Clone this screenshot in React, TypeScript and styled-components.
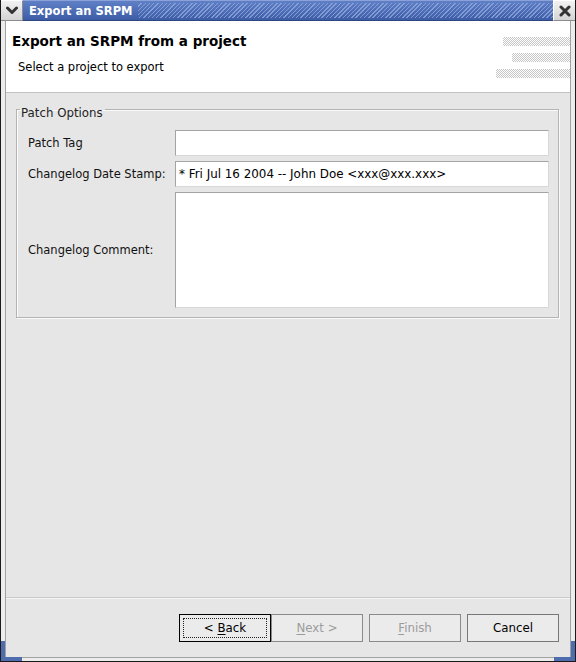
import * as React from "react";
import styled, { createGlobalStyle } from "styled-components";

const GlobalStyle = createGlobalStyle`
  html, body {
    margin: 0;
    padding: 0;
    background: #e6e6e6;
  }
  body {
    font-family: "DejaVu Sans", "Liberation Sans", sans-serif;
    font-size: 11.5px;
    color: #000;
  }
`;

const Frame = styled.div`
  position: relative;
  width: 576px;
  height: 662px;
  box-sizing: border-box;
  display: flex;
  flex-direction: column;
  background: #ececec;
  border-left: 1px solid #1a1a1a;
  border-right: 1px solid #1a1a1a;
  border-bottom: 1px solid #1a1a1a;
  overflow: hidden;
`;

const TitleBar = styled.div`
  display: flex;
  height: 21px;
  flex: none;
  margin-left: -1px;
  margin-right: -1px;
`;

const FrameButton = styled.div`
  width: 23px;
  display: flex;
  align-items: center;
  justify-content: center;
  background: linear-gradient(#f2f2f2, #d4d4d4);
  border: 1px solid #8c8c8c;
  border-top-color: #fff;
  border-left-color: #fff;
  box-sizing: border-box;
`;

const TitleArea = styled.div`
  flex: 1;
  display: flex;
  align-items: center;
  background: linear-gradient(#5f7fc6, #3c5ca6);
  border-top: 1px solid #8aa2d8;
  border-bottom: 1px solid #2e4680;
  box-sizing: border-box;
`;

const TitleText = styled.span`
  color: #fff;
  font-weight: bold;
  font-size: 11.5px;
  padding: 0 5px 0 6px;
  white-space: nowrap;
`;

const Hatch = styled.div`
  flex: 1;
  align-self: stretch;
  margin: 2px 0;
  background: repeating-linear-gradient(
    135deg,
    transparent 0 2px,
    rgba(150, 172, 224, 0.75) 2px 3px
  );
`;

const Client = styled.div`
  flex: 1;
  display: flex;
  flex-direction: column;
  margin: 0 4px 3px 4px;
  border: 1px solid #a2a2a2;
  border-top: none;
  background: #e6e6e6;
`;

const Header = styled.div`
  height: 71px;
  flex: none;
  display: flex;
  background: #fff;
  border-bottom: 1px solid #c4c4c4;
`;

const HeaderText = styled.div`
  flex: 1;
  padding: 12px 0 0 6px;
`;

const PageTitle = styled.div`
  font-weight: bold;
  font-size: 13.5px;
  line-height: 16px;
`;

const PageMessage = styled.div`
  font-size: 11.5px;
  line-height: 14px;
  margin: 11px 0 0 6px;
`;

const Decor = styled.div`
  width: 76px;
  display: flex;
  flex-direction: column;
  align-items: flex-end;
  gap: 7px;
  padding: 16px 0 0 0;
`;

const DecorBar = styled.div<{ $w: number }>`
  width: ${(p) => p.$w}px;
  height: 9px;
  background: repeating-conic-gradient(#c6c6c6 0 25%, #fff 0 50%) 0 0 / 2px 2px;
`;

const Body = styled.div`
  flex: 1;
  display: flex;
  flex-direction: column;
  padding: 5px 11px 0 10px;
`;

const Group = styled.fieldset`
  margin: 0;
  padding: 10px 9px 9px 11px;
  border: 1px solid #b4b4b4;
  box-shadow: inset 1px 1px 0 #fafafa, 1px 1px 0 #fafafa;
`;

const Legend = styled.legend`
  padding: 8px 2px 0 1px;
  margin-left: -8px;
  line-height: 14px;
  color: #222;
  font-size: 11.8px;
`;

const Form = styled.div`
  display: grid;
  grid-template-columns: 147px 1fr;
  grid-template-rows: 26px 26px 116px;
  row-gap: 5px;
`;

const Label = styled.label`
  display: flex;
  align-items: center;
  white-space: nowrap;
  color: #111;
`;

const Field = styled.div<{ $multi?: boolean }>`
  box-sizing: border-box;
  background: #fff;
  border: 1px solid #a4a4a4;
  border-right-color: #d8d8d8;
  border-bottom-color: #d8d8d8;
  padding: ${(p) => (p.$multi ? "3px 4px" : "0 3px")};
  display: flex;
  align-items: ${(p) => (p.$multi ? "flex-start" : "center")};
  font-size: 11.9px;
  white-space: nowrap;
`;

const Spacer = styled.div`
  flex: 1;
`;

const Separator = styled.div`
  height: 1px;
  background: #c8c8c8;
  border-bottom: 1px solid #f6f6f6;
  margin: 0 -11px 0 -10px;
`;

const ButtonRow = styled.div`
  display: flex;
  justify-content: flex-end;
  padding: 15px 0 15px 0;
  gap: 6px;
`;

const ButtonPair = styled.div`
  display: flex;
`;

const Button = styled.button<{ $default?: boolean }>`
  width: 92px;
  height: 28px;
  margin: 0;
  padding: 0;
  box-sizing: border-box;
  font-family: "DejaVu Sans", "Liberation Sans", sans-serif;
  font-size: 11.8px;
  color: #000;
  background: #ebebeb;
  border: 1px solid ${(p) => (p.$default ? "#000" : "#777")};
  position: relative;

  &:disabled {
    color: #9c9c9c;
    border-color: #8a8a8a;
  }
`;

const FocusRing = styled.span`
  position: absolute;
  inset: 3px;
  border: 1px dotted #222;
`;

const Mnemonic = styled.u`
  text-underline-offset: 2px;
`;

const Corner = styled.div<{ $side: "left" | "right" }>`
  position: absolute;
  bottom: 0;
  ${(p) => (p.$side === "left" ? "left: 0;" : "right: 0;")}
  width: 21px;
  height: 20px;
  box-sizing: border-box;
  border-bottom: 4px solid #4f6cae;
  ${(p) =>
    p.$side === "left"
      ? "border-left: 4px solid #4f6cae;"
      : "border-right: 4px solid #4f6cae;"}
`;

const Chevron = () => (
  <svg width="12" height="9" viewBox="0 0 12 9">
    <path d="M1.5 2 L6 6.5 L10.5 2" fill="none" stroke="#333" strokeWidth="3" strokeLinecap="round" strokeLinejoin="round" />
  </svg>
);

const CloseIcon = () => (
  <svg width="12" height="12" viewBox="0 0 12 12">
    <path d="M2 2 L10 10 M10 2 L2 10" stroke="#333" strokeWidth="3" strokeLinecap="round" />
  </svg>
);

export default function App() {
  return (
    <>
      <GlobalStyle />
      <Frame>
        <TitleBar>
          <FrameButton>
            <Chevron />
          </FrameButton>
          <TitleArea>
            <TitleText>Export an SRPM</TitleText>
            <Hatch />
          </TitleArea>
          <FrameButton>
            <CloseIcon />
          </FrameButton>
        </TitleBar>
        <Client>
          <Header>
            <HeaderText>
              <PageTitle>Export an SRPM from a project</PageTitle>
              <PageMessage>Select a project to export</PageMessage>
            </HeaderText>
            <Decor>
              <DecorBar $w={67} />
              <DecorBar $w={58} />
              <DecorBar $w={74} />
            </Decor>
          </Header>
          <Body>
            <Group>
              <Legend>Patch Options</Legend>
              <Form>
                <Label>Patch Tag</Label>
                <Field />
                <Label>Changelog Date Stamp:</Label>
                <Field>* Fri Jul 16 2004 -- John Doe &lt;xxx@xxx.xxx&gt;</Field>
                <Label>Changelog Comment:</Label>
                <Field $multi />
              </Form>
            </Group>
            <Spacer />
            <Separator />
            <ButtonRow>
              <ButtonPair>
                <Button $default>
                  <FocusRing />
                  &lt; <Mnemonic>B</Mnemonic>ack
                </Button>
                <Button disabled>
                  <Mnemonic>N</Mnemonic>ext &gt;
                </Button>
              </ButtonPair>
              <Button disabled>
                <Mnemonic>F</Mnemonic>inish
              </Button>
              <Button>Cancel</Button>
            </ButtonRow>
          </Body>
        </Client>
        <Corner $side="left" />
        <Corner $side="right" />
      </Frame>
    </>
  );
}
